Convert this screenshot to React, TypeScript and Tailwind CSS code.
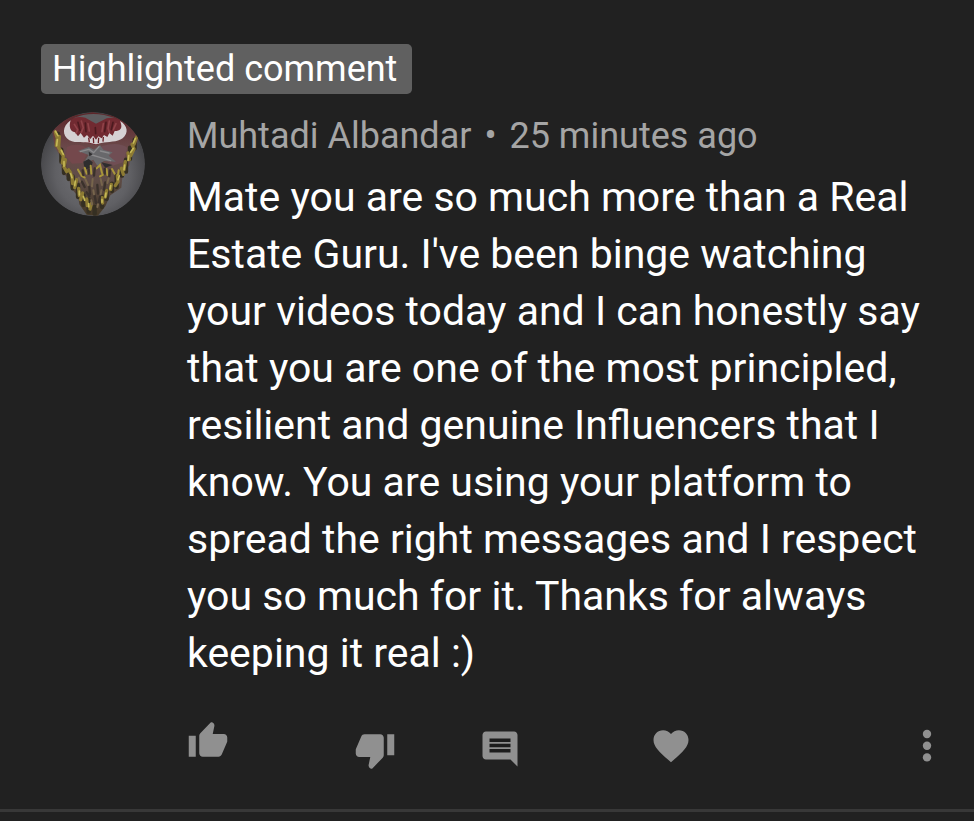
import type { ReactNode } from "react";

const COMMENT =
  "Mate you are so much more than a Real Estate Guru. I've been binge watching your videos today and I can honestly say that you are one of the most principled, resilient and genuine Influencers that I know. You are using your platform to spread the right messages and I respect you so much for it. Thanks for always keeping it real :)";

function Avatar() {
  return (
    <svg viewBox="35 35 312 312" className="size-[104px] shrink-0 rounded-full" role="img" aria-label="Muhtadi Albandar">
      <defs>
        <radialGradient id="backdrop" cx="0.5" cy="0.58" r="0.55">
          <stop offset="0" stopColor="#77777b" />
          <stop offset="0.65" stopColor="#606064" />
          <stop offset="1" stopColor="#434346" />
        </radialGradient>
        <linearGradient id="robe" x1="0" y1="0" x2="0" y2="1">
          <stop offset="0" stopColor="#5c2529" />
          <stop offset="0.35" stopColor="#6b4a4b" />
          <stop offset="0.65" stopColor="#5e4c46" />
          <stop offset="1" stopColor="#443826" />
        </linearGradient>
      </defs>
      <circle cx="191" cy="191" r="156" fill="url(#backdrop)" />
      <path d="M68 88 L110 50 L190 36 L285 52 L328 104 L322 140 L304 165 L300 195 L280 222 L276 262 L243 285 L228 318 L205 347 L172 343 L150 312 L146 288 L124 262 L120 238 L98 215 L94 170 L76 140Z" fill="url(#robe)" />
      <path d="M132 54 Q190 28 258 54 L222 62 L200 72 L172 58Z" fill="#5e5d60" />
      <path d="M118 66 Q136 44 168 52 L200 70 L232 54 Q262 46 284 70 Q298 98 272 118 L230 122 L200 134 L160 124 L122 116 Q98 90 118 66Z" fill="#712a31" />
      <path d="M124 60 C98 78 98 106 120 120 C140 130 166 124 184 128 L200 132 L216 128 C236 124 264 126 280 114 C298 98 296 76 272 62 C280 80 276 90 262 92 L256 92 L250 106 L240 98 L234 110 L224 104 L217 114 L207 108 L200 118 L191 106 L183 116 L173 104 L164 112 L154 98 L146 108 L137 96 C122 94 118 78 124 60Z" fill="#d6d1d3" />
      <path d="M135 72l10 16-4 10M156 62l6 20-6 14M176 70l4 22M222 70l-4 24M240 62l-4 22 4 12M260 70l-8 18" fill="none" stroke="#8f4248" strokeWidth="5" strokeLinecap="round" />
      <path d="M146 66l6 24M168 68l2 26M198 82l1 18M230 66l-4 28M251 66l-5 22" fill="none" stroke="#4b1a1f" strokeWidth="5" strokeLinecap="round" />
      <path d="M178 112l2 14M192 112l1 16M208 112l-1 16M222 110l-1 14" fill="none" stroke="#6a1f26" strokeWidth="4" />
      <path d="M112 140 Q148 124 178 146 L160 188 L128 190 L110 168Z" fill="#74484c" />
      <path d="M216 138 Q265 122 294 142 L282 186 L250 196 L226 176Z" fill="#704e54" />
      <path d="M146 152 L178 140 L194 148 L212 134 L222 148 L250 156 L238 166 L260 184 L224 182 L204 196 L192 178 L162 188 L178 164Z" fill="#68686b" />
      <path d="M153 154l26-7 14 10 16-18M188 164l24 7 32 10M213 152l26 6" fill="none" stroke="#8a898b" strokeWidth="4" strokeLinecap="round" />
      <path d="M162 184l16-8 12 10-4 16-20 6zM216 186l34 8-22 8zM178 154l12 8-10 6z" fill="#2e2d2e" />
      <g fill="none" strokeLinecap="round">
        <path d="M86 100v34M96 148v36M104 190v28M118 210v26M130 228v36M146 254v36M162 282v32M178 298v36M196 320v20M316 118v26M302 142v34M290 178v36M278 206v20M262 226v34M248 250v22M232 272v24M218 290v30" stroke="#352f22" strokeWidth="13" />
        <path d="M78 96l6 18-3 22M90 108l-2 34 8 12M92 152l10 14-3 22M108 178l-4 22 8 14M118 208l6 10M128 226l2 24M142 238l-6 24M148 264l2 22M160 278l-6 20M172 296l2 20M186 310l-4 16M322 110l-8 22M308 132l6 14-10 20M296 158l4 20M288 184l-4 24M276 204l6 18M264 226l2 18-8 12M246 252l-2 16M232 270l-4 20M218 292l2 16" stroke="#8d7b33" strokeWidth="10" />
        <path d="M78 92l8 14M84 118l-2 18M96 150l6 12M104 184v14M124 220l4 12M138 242l-2 14M150 272v12M162 288l4 12M178 310v10M318 114l-6 14M312 144l-8 12M298 166l-2 14M286 194l-2 14M270 226l-4 12M244 256l-2 10M230 278l-2 12M218 298v8" stroke="#c6b957" strokeWidth="5" />
        <path d="M146 208l8 14M166 202l6 18M184 196l2 24M202 204l10-10 6 24M232 206l2 18M248 206l8 14M222 222l-10 6M156 226l10 6M268 210l-2 14" stroke="#a8963b" strokeWidth="6" />
        <path d="M160 210l2 14M178 208v12M196 204l-2 22M226 206v14M242 210l-2 18M158 244l8 16M180 260l2 22M204 254l2 26M228 246l-4 22M196 286l4 22M172 276l8 12M212 290l-4 18" stroke="#3a312b" strokeWidth="7" />
        <path d="M168 236l8 18M190 236l-2 22M214 236l4 18M238 234l-4 14M192 270l2 12M216 270l-2 12M186 300l2 12M206 312l-2 8M148 232l4 12" stroke="#77654c" strokeWidth="6" />
      </g>
    </svg>
  );
}

function Glyph({ children }: { children: ReactNode }) {
  return (
    <svg viewBox="0 0 24 24" fill="currentColor" className="size-[42px]" aria-hidden="true">
      {children}
    </svg>
  );
}

export default function App() {
  return (
    <main className="min-h-screen bg-[#212121] font-[Roboto,sans-serif] text-white">
      <article className="border-b-3 border-[#383838] pt-11 pb-[38px] pr-[38px] pl-[41px]">
        <span className="inline-block h-[50px] rounded-[5px] bg-[#606060] pr-[15px] pl-[11px] text-[36px] leading-[50px]">
          Highlighted comment
        </span>
        <div className="mt-[10px] flex gap-[42px]">
          <div className="pt-2">
            <Avatar />
          </div>
          <div className="min-w-0 flex-1">
            <header className="pt-2 text-[36px] leading-[48px] text-[#a5a5a5]">
              Muhtadi Albandar <span className="mx-1">•</span> 25 minutes ago
            </header>
            <p className="mt-[9px] text-[41px] leading-[57px]">{COMMENT}</p>
            <div className="mt-[38px] flex h-[51px] items-start text-[#909090]">
              <button type="button" aria-label="Like" className="w-[167px]">
                <Glyph>
                  <path d="M1 21h4V9H1v12zM23 10c0-1.1-.9-2-2-2h-6.3l.95-4.6.03-.3c0-.45-.2-.85-.5-1.2C14.6 1.3 13.9 1.1 13.4 1.6L7.6 7.6C7.2 8 7 8.5 7 9v10c0 1.1.9 2 2 2h9c.83 0 1.54-.5 1.84-1.22l3.02-7.05c.1-.23.14-.47.14-.73v-2z" />
                </Glyph>
              </button>
              <button type="button" aria-label="Dislike" className="w-[125px] pt-[9px]">
                <Glyph>
                  <path d="M15 3H6c-.83 0-1.54.5-1.84 1.22l-3.02 7.05c-.1.23-.14.47-.14.73v2c0 1.1.9 2 2 2h6.3l-.95 4.6-.03.3c0 .45.2.85.5 1.2.6.6 1.3.8 1.8.3l5.8-6c.38-.4.58-.9.58-1.4V5c0-1.1-.9-2-2-2zm4 0v12h4V3h-4z" />
                </Glyph>
              </button>
              <button type="button" aria-label="Reply" className="w-[171px] pt-[8px]">
                <Glyph>
                  <path d="M22 4c0-1.1-.9-2-2-2H4c-1.1 0-2 .9-2 2v12c0 1.1.9 2 2 2h14l4 4V4z" />
                  <path d="M18 14H6v-2h12v2zm0-3H6V9h12v2zm0-3H6V6h12v2z" fill="#1c1c1c" />
                </Glyph>
              </button>
              <button type="button" aria-label="Heart" className="pt-[5px]">
                <Glyph>
                  <path d="M12 21.35l-1.45-1.32C5.4 15.36 2 12.28 2 8.5 2 5.42 4.42 3 7.5 3c1.74 0 3.41.81 4.5 2.09C13.09 3.81 14.76 3 16.5 3 19.58 3 22 5.42 22 8.5c0 3.78-3.4 6.86-8.55 11.54L12 21.35z" />
                </Glyph>
              </button>
              <button type="button" aria-label="More actions" className="ml-auto pt-[5px]">
                <svg viewBox="0 0 18 42" fill="currentColor" className="h-[42px] w-[18px]" aria-hidden="true">
                  <circle cx="9" cy="9" r="4.2" />
                  <circle cx="9" cy="20.7" r="4.2" />
                  <circle cx="9" cy="32.4" r="4.2" />
                </svg>
              </button>
            </div>
          </div>
        </div>
      </article>
    </main>
  );
}
